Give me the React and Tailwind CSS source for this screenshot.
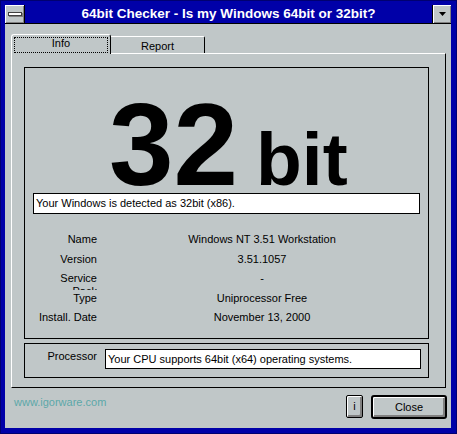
export default function App() {
  return (
    <div className="w-[457px] h-[434px] bg-[#0000a8] border border-[#000070] pt-[4px] pl-[4px] pr-[5px] pb-[5px] flex flex-col font-['Liberation_Sans',Arial,sans-serif] text-[11px] text-black select-none">
      {/* Title bar */}
      <div className="flex h-[19px] shrink-0 border-b border-black">
        <div className="w-[20px] h-full bg-[#c0c7c8] border-r border-black flex items-center justify-center shadow-[inset_1px_1px_0_#fff,inset_-1px_-1px_0_#808080]">
          <div className="w-[14px] h-[4px] bg-white border border-[#404040] shadow-[1px_1px_0_#808080]" />
        </div>
        <div className="flex-1 flex justify-center text-white font-bold text-[13.5px] leading-[18px]">
          64bit Checker - Is my Windows 64bit or 32bit?
        </div>
        <div className="w-[19px] h-full bg-[#c0c7c8] border-l border-black flex items-center justify-center shadow-[inset_1px_1px_0_#fff,inset_-1px_-1px_0_#808080]">
          <svg width="7" height="4" viewBox="0 0 7 4">
            <polygon points="0,0 7,0 3.5,4" fill="#000" />
          </svg>
        </div>
      </div>

      {/* Client area */}
      <div className="flex-1 bg-[#c0c7c8] flex flex-col pt-[10px] pl-[6px] pr-[5px]">
        {/* Tabs */}
        <div className="flex h-[20px] -mb-px">
          <div className="relative z-10 w-[100px] h-[20px] bg-[#c0c7c8] border-l border-t border-white border-r border-r-black rounded-t-[3px]">
            <div className="ml-[2px] mt-[2px] w-[94px] h-[16px] border border-dotted border-black flex justify-center leading-[10px]">
              Info
            </div>
          </div>
          <div className="mt-[2px] w-[94px] h-[17px] border-t border-white border-r border-r-black rounded-tr-[2px] flex justify-center pt-[1px] leading-[16px]">
            Report
          </div>
        </div>

        {/* Tab panel */}
        <div className="w-[435px] h-[335px] border-l border-t border-white border-r border-b border-r-black border-b-black flex flex-col">
          {/* Group 1 */}
          <div className="mt-[13px] ml-[12px] w-[405px] h-[272px] border border-black flex flex-col">
            <div className="mt-[29px] pl-[84px] h-[96px] flex items-baseline font-bold">
              <span className="text-[116px] leading-[96px]">32</span>
              <span className="ml-[18px] text-[75px] leading-[60px]">bit</span>
            </div>
            <div className="ml-[8px] w-[387px] h-[21px] border border-black bg-white pl-[2px] leading-[19px]">
              Your Windows is detected as 32bit (x86).
            </div>
            <div className="mt-[16px] flex flex-col">
              <InfoRow label="Name" value="Windows NT 3.51 Workstation" />
              <InfoRow label="Version" value="3.51.1057" />
              <div className="flex h-[19.5px]">
                <div className="ml-[12px] w-[60px] text-right">
                  <div className="h-[21px] overflow-hidden pt-[3px] leading-[13px]">Service Pack</div>
                </div>
                <div className="ml-[42px] w-[246px] text-center leading-[19.5px]">-</div>
              </div>
              <InfoRow label="Type" value="Uniprocessor Free" />
              <InfoRow label="Install. Date" value="November 13, 2000" />
            </div>
          </div>

          {/* Group 2 */}
          <div className="mt-[4px] ml-[12px] w-[405px] h-[35px] border border-black flex">
            <div className="ml-[12px] mt-[6px] w-[60px] text-right leading-[13px]">Processor</div>
            <div className="ml-[8px] mt-[5px] w-[316px] h-[20px] border border-black bg-white pl-[2px] leading-[18px]">
              Your CPU supports 64bit (x64) operating systems.
            </div>
          </div>
        </div>

        {/* Bottom row */}
        <div className="flex mt-[7px]">
          <div className="ml-[3px] mt-[1px] text-[#5ca8a8] leading-[13px]">www.igorware.com</div>
          <div className="ml-auto -mr-px flex gap-[8px]">
            <button className="w-[17px] h-[23px] border border-black rounded-[2px] bg-[#c0c7c8] shadow-[inset_1px_1px_0_#fff,inset_-2px_-2px_0_#808080] flex items-center justify-center leading-none">
              i
            </button>
            <button className="w-[76px] h-[24px] border-2 border-black rounded-[3px] bg-[#c0c7c8] shadow-[inset_1px_1px_0_#fff,inset_-2px_-2px_0_#808080] flex items-center justify-center leading-none">
              Close
            </button>
          </div>
        </div>
      </div>
    </div>
  );
}

function InfoRow({ label, value }) {
  return (
    <div className="flex h-[19.5px] leading-[19.5px]">
      <div className="ml-[12px] w-[60px] text-right whitespace-nowrap">{label}</div>
      <div className="ml-[42px] w-[246px] text-center">{value}</div>
    </div>
  );
}
